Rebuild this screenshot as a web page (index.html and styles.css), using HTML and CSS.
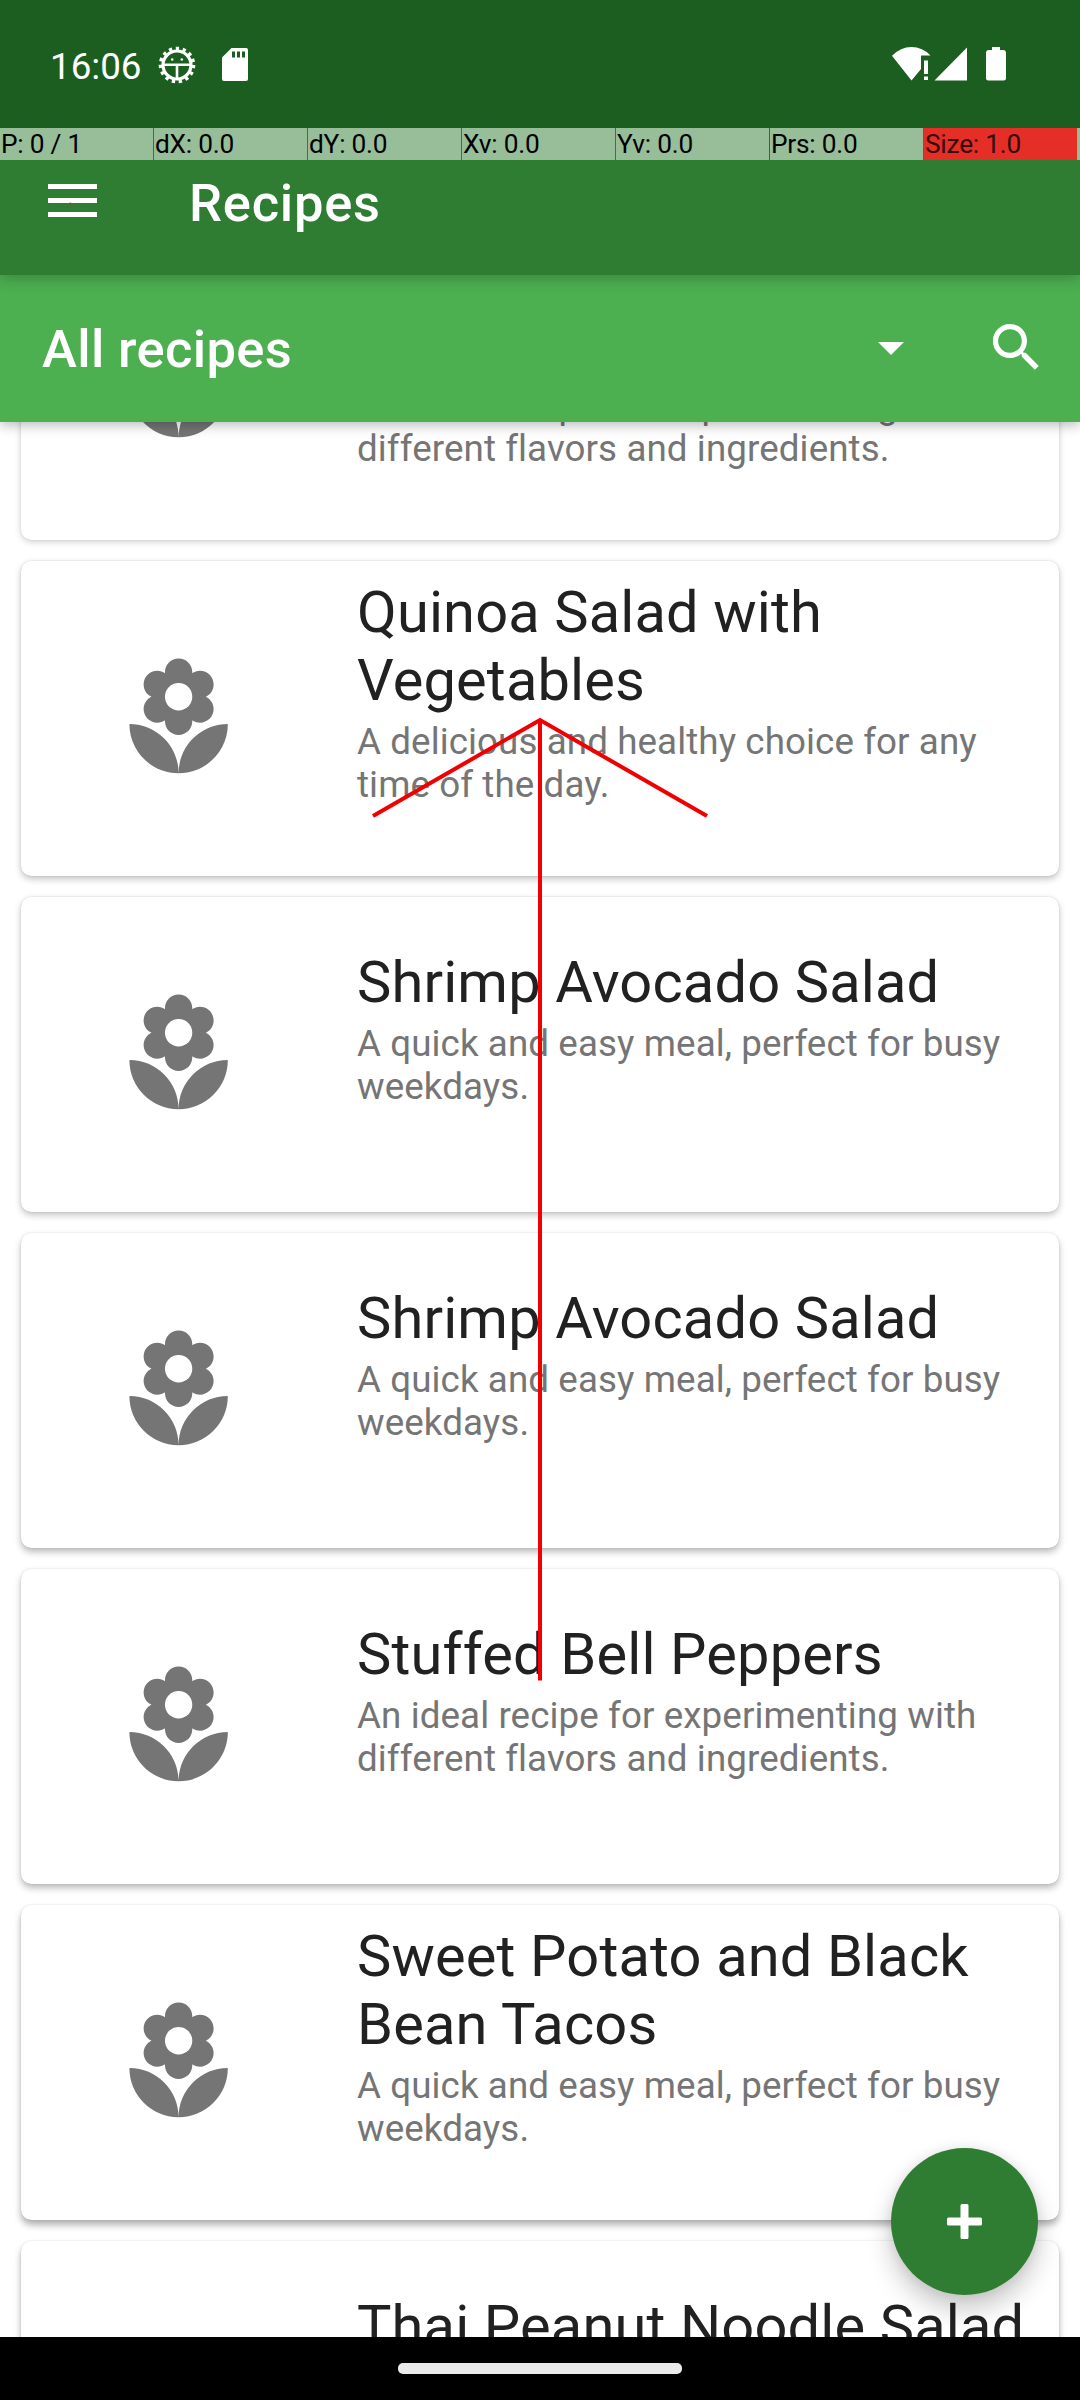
FILE: index.html
```html
<!DOCTYPE html>
<html lang="en">
<head>
<meta charset="utf-8">
<title>Recipes</title>
<link rel="stylesheet" href="styles.css">
</head>
<body>
<svg class="defs" width="0" height="0">
  <symbol id="florist" viewBox="0 0 24 24"><path d="M12 22c4.97 0 9-4.03 9-9-4.97 0-9 4.03-9 9zM5.6 10.25c0 1.38 1.12 2.5 2.5 2.5.53 0 1.01-.16 1.42-.44l-.02.19c0 1.38 1.12 2.5 2.5 2.5s2.5-1.12 2.5-2.5l-.02-.19c.4.28.89.44 1.42.44 1.38 0 2.5-1.12 2.5-2.5 0-1-.59-1.85-1.43-2.25.84-.4 1.43-1.25 1.43-2.25 0-1.38-1.12-2.5-2.5-2.5-.53 0-1.01.16-1.42.44l.02-.19C14.5 2.12 13.38 1 12 1S9.500 2.12 9.500 3.500l.02.19c-.4-.28-.89-.44-1.420-.44-1.380 0-2.500 1.120-2.500 2.500 0 1 .59 1.850 1.430 2.250-.84.4-1.430 1.250-1.430 2.250zM12 5.500c1.380 0 2.500 1.120 2.500 2.500s-1.120 2.500-2.500 2.500S9.500 9.380 9.500 8s1.120-2.500 2.500-2.500zM3 13c0 4.970 4.030 9 9 9 0-4.970-4.030-9-9-9z"/></symbol>
</svg>
<div class="screen">
  <header class="status">
    <span class="time">16:06</span>
    <svg class="bug" viewBox="0 0 38 38">
      <circle cx="19" cy="19" r="14" fill="none" stroke="#fff" stroke-width="3.2"/>
      <circle cx="19" cy="19" r="16.500" fill="none" stroke="#fff" stroke-width="3.600" stroke-dasharray="3.300 3.612"/>
      <path d="M5 18.800h28M19 19v14" stroke="#fff" stroke-width="2.600"/>
      <circle cx="14.200" cy="13.500" r="1.300" fill="#fff"/><circle cx="23.800" cy="13.500" r="1.300" fill="#fff"/>
    </svg>
    <svg class="sd" viewBox="0 0 26 33"><path fill="#fff" fill-rule="evenodd" d="M9.500 0H24a2 2 0 0 1 2 2v29a2 2 0 0 1-2 2H2a2 2 0 0 1-2-2V9.500zM10 3.500v6h3v-6zM15 3.500v6h3v-6zM20 3.500v6h3v-6z"/></svg>
    <svg class="signals" viewBox="0 0 114 34" fill="#fff">
      <path d="M0 8.800Q8.500 0 19.500 0T38.500 8.500H29V22L19.500 33.500z"/>
      <path d="M32 13.500h4V27h-4zM32 29.500h4V33h-4zM42.500 33.500L75 .5v33z"/>
      <path d="M100 0h8v3h3a3 3 0 0 1 3 3v25a2.500 2.500 0 0 1-2.500 2.500h-15A2.500 2.500 0 0 1 94 31V6a3 3 0 0 1 3-3h3z"/>
    </svg>
  </header>
  <div class="appbar">
    <div class="pointer">
      <span>P: 0 / 1</span><span>dX: 0.0</span><span>dY: 0.0</span><span>Xv: 0.0</span><span class="yv">Yv: 0.0</span><span>Prs: 0.0</span><span class="size">Size: 1.0</span><i></i>
    </div>
    <div class="toolbar">
      <svg class="menu" viewBox="0 0 49 33"><path d="M0 0h49v5H0zM0 14h49v5H0zM0 28h49v5H0z" fill="#fff"/><circle cx="22.300" cy="19.600" r="1.100" fill="#8a4a20"/></svg>
      <h1>Recipes</h1>
    </div>
  </div>
  <div class="filter">
    <h2>All recipes</h2>
    <svg class="caret" viewBox="0 0 26 13"><path d="M0 0h26L13 13z" fill="#fff"/></svg>
    <svg class="search" viewBox="0 0 24 24"><path fill="#fff" d="M15.500 14h-.79l-.28-.27C15.410 12.590 16 11.110 16 9.500 16 5.910 13.090 3 9.500 3S3 5.910 3 9.500 5.910 16 9.500 16c1.610 0 3.090-.59 4.230-1.570l.27.28v.79l5 4.990L20.490 19l-4.990-5zm-6 0C7.010 14 5 11.990 5 9.500S7.010 5 9.500 5 14 7.010 14 9.500 11.990 14 9.500 14z"/></svg>
  </div>
  <main class="list">
    <article class="card"><div class="thumb"><svg><use href="#florist"/></svg></div><div class="text"><p>An ideal recipe for experimenting with different flavors and ingredients.</p></div></article>
    <article class="card"><div class="thumb"><svg><use href="#florist"/></svg></div><div class="text"><h3>Quinoa Salad with Vegetables</h3><p>A delicious and healthy choice for any time of the day.</p></div></article>
    <article class="card"><div class="thumb"><svg><use href="#florist"/></svg></div><div class="text"><h3>Shrimp Avocado Salad</h3><p>A quick and easy meal, perfect for busy weekdays.</p></div></article>
    <article class="card"><div class="thumb"><svg><use href="#florist"/></svg></div><div class="text"><h3>Shrimp Avocado Salad</h3><p>A quick and easy meal, perfect for busy weekdays.</p></div></article>
    <article class="card"><div class="thumb"><svg><use href="#florist"/></svg></div><div class="text"><h3>Stuffed Bell Peppers</h3><p>An ideal recipe for experimenting with different flavors and ingredients.</p></div></article>
    <article class="card"><div class="thumb"><svg><use href="#florist"/></svg></div><div class="text"><h3>Sweet Potato and Black Bean Tacos</h3><p>A quick and easy meal, perfect for busy weekdays.</p></div></article>
    <article class="card"><div class="thumb"></div><div class="text"><h3>Thai Peanut Noodle Salad</h3><p>&nbsp;<br>&nbsp;</p></div></article>
    <button class="fab" aria-label="Add recipe"><svg viewBox="0 0 35 35"><path d="M15 0h5a1.500 1.500 0 0 1 1.500 1.500v12h12A1.500 1.500 0 0 1 35 15v5a1.500 1.500 0 0 1-1.500 1.500h-12v12A1.500 1.500 0 0 1 20 35h-5a1.500 1.500 0 0 1-1.500-1.500v-12h-12A1.500 1.500 0 0 1 0 20v-5a1.500 1.500 0 0 1 1.500-1.500h12v-12A1.500 1.500 0 0 1 15 0z" fill="#fff"/></svg></button>
  </main>
  <footer class="nav"><div class="pill"></div></footer>
  <svg class="swipe" viewBox="0 0 1080 2400"><path d="M540 1680.500V720M373 816L540 720L707 816" fill="none" stroke="#f00000" stroke-width="4"/></svg>
</div>
</body>
</html>
```
FILE: styles.css
```css
* { box-sizing: border-box; margin: 0; padding: 0; }
body { font-family: Roboto, sans-serif; background: #fff; }
svg { display: block; flex: none; }
.defs { position: absolute; }
.screen { position: relative; width: 1080px; height: 2400px; overflow: hidden; display: flex; flex-direction: column; }

.status { position: relative; z-index: 4; height: 128px; flex: none; background: #1b5e20; display: flex; align-items: flex-start; padding: 0 74px 0 50px; color: #fff; }
.time { width: 108px; font-size: 36.75px; line-height: 43px; margin-top: 45px; }
.bug { width: 38px; height: 38px; margin-top: 46px; }
.sd { width: 26px; height: 33px; margin: 48px auto 0 26px; }
.signals { width: 114px; height: 34px; margin: 47px 0 0; }

.appbar { position: relative; z-index: 3; height: 147px; flex: none; background: #2e7d32; box-shadow: 0 3px 14px rgba(0,0,0,.25); }
.pointer { height: 32px; display: grid; grid-template-columns: repeat(7, 153px) 1fr; column-gap: 1px; font-size: 26.25px; line-height: 32px; letter-spacing: -.22px; color: #000; }
.pointer span { background: #97be99; padding-left: 1px; white-space: nowrap; }
.pointer i { background: #97be99; margin-left: -1px; }
.pointer .yv { box-shadow: 1px 0 #b03020; }
.pointer .size { background: #e52f26; color: #330a08; }
.toolbar { height: 115px; display: flex; align-items: flex-start; padding-left: 48px; }
.menu { width: 49px; height: 33px; margin-top: 24px; }
h1, h2 { color: #fff; font-weight: 500; font-size: 52.5px; line-height: 62px; }
h1 { margin: 12px 0 0 92px; letter-spacing: .75px; }

.filter { position: relative; z-index: 2; height: 147px; flex: none; background: #4caf50; box-shadow: 0 3px 12px rgba(0,0,0,.28); display: flex; align-items: center; padding: 0 32px 0 42px; }
h2 { flex: 1; padding-top: 1px; letter-spacing: .35px; }
.caret { width: 26px; height: 13px; margin-right: 81px; }
.search { width: 63px; height: 63px; margin-bottom: 2px; }

.list { position: relative; flex: 1; min-height: 0; overflow: hidden; padding: 0 21px; display: flex; flex-direction: column; gap: 21px; background: #fff; }
.card { --y: 3px; --a: .24; flex: none; height: 315px; border-radius: 10.5px; background: #fff; display: flex; box-shadow: 0 var(--y) 7px rgba(0,0,0,var(--a)), 0 0 2px rgba(0,0,0,.12); }
.card:first-child { margin-top: -197px; --y: 2px; --a: .18; }
.card:nth-child(n+4) { --y: 4px; --a: .27; }
.card:nth-child(n+6) { --y: 5px; --a: .31; }
.thumb { width: 315px; flex: none; display: flex; align-items: center; justify-content: center; }
.thumb svg { width: 131.25px; height: 131.25px; fill: #757575; }
.text { flex: 1; padding: 0 16px 54px 21px; display: flex; flex-direction: column; justify-content: center; }
.card:first-child .text { justify-content: flex-end; padding-bottom: 70px; }
h3 { font-weight: 400; font-size: 57.75px; line-height: 68px; letter-spacing: .16px; color: #212121; }
p { margin-top: 6px; font-size: 36.75px; line-height: 43px; letter-spacing: .09px; color: #757575; }
.fab { position: absolute; right: 42px; bottom: 42px; width: 147px; height: 147px; border: 0; border-radius: 50%; background: #2e7d32; display: flex; align-items: center; justify-content: center; box-shadow: 0 14px 26px rgba(0,0,0,.22), 0 0 12px rgba(0,0,0,.08); }
.fab svg { width: 35px; height: 35px; }

.nav { height: 63px; flex: none; background: #000; padding-top: 26px; position: relative; z-index: 3; }
.pill { width: 284px; height: 11px; border-radius: 5px; background: #ebebeb; margin: 0 auto; }
.swipe { position: absolute; inset: 0; width: 1080px; height: 2400px; z-index: 4; pointer-events: none; }
```
